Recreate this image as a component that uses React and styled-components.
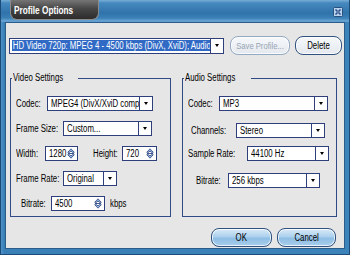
import React from "react";
import styled, { createGlobalStyle } from "styled-components";

const GlobalStyle = createGlobalStyle`
  html, body { margin:0; padding:0; background:#3f86bd; }
  body {
    width:350px; height:255px; overflow:hidden;
    font-family:"Liberation Sans", Arial, sans-serif;
  }
`;

const Window = styled.div`
  width:350px;
  height:255px;
  box-sizing:border-box;
  display:flex;
  flex-direction:column;
  border:1px solid #1d4b78;
  border-top:none;
  background:linear-gradient(to right, #4d93c8, #3a7fb6 3px, #3c83ba);
`;

const TitleBar = styled.div`
  height:22px;
  flex:none;
  display:flex;
  align-items:flex-start;
  background:linear-gradient(to bottom, #78add7 0, #4589bf 3px, #2f73aa 13px, #3a80b7 18px, #6aa5d3 21px, #5a99cb 22px);
`;

const TitleTab = styled.div`
  margin-left:9px;
  width:89px;
  height:20px;
  box-sizing:border-box;
  padding-left:3px;
  display:flex;
  align-items:center;
  border:1px solid #8c8c8c;
  border-top:none;
  border-radius:0 0 7px 7px;
  background:linear-gradient(to bottom, #757575, #474747 45%, #2c2c2c);
  color:#fff;
  font-weight:bold;
  font-size:11px;
`;

const Squeeze = styled.span`
  display:inline-block;
  white-space:nowrap;
  transform:scaleX(${p => p.$x || 0.78});
  transform-origin:${p => (p.$center ? "center" : "left")} center;
`;

const CloseButton = styled.div`
  margin:7px 6px 0 auto;
  width:10px;
  height:10px;
  display:flex;
`;

const Body = styled.div`
  flex:1;
  margin:0 4px 5px 4px;
  border:1px solid #2a5c8c;
  background:#e6e6e6;
  display:flex;
  flex-direction:column;
`;

const ProfileRow = styled.div`
  margin-top:13px;
  padding-left:3px;
  height:19px;
  display:flex;
  align-items:center;
  gap:5px;
`;

const Box = styled.div`
  flex:none;
  width:${p => p.$w}px;
  height:${p => p.$h || 15}px;
  box-sizing:border-box;
  border:1px solid #2e3f7c;
  background:#fff;
  display:flex;
  align-items:center;
  overflow:hidden;
`;

const BoxText = styled.span`
  flex:1;
  min-width:0;
  overflow:hidden;
  padding-left:${p => p.$pad ?? 3}px;
  font-size:10px;
  line-height:13px;
  color:#000;
  white-space:nowrap;
`;

const Highlight = styled(Squeeze)`
  background:#316ac5;
  color:#fff;
  padding:0 1px;
  line-height:11px;
`;

const Arrow = styled.span`
  flex:none;
  width:12px;
  align-self:stretch;
  border-left:1px solid #2e3f7c;
  display:flex;
  align-items:center;
  justify-content:center;
  &::after {
    content:"";
    border-left:2.5px solid transparent;
    border-right:2.5px solid transparent;
    border-top:3px solid #000;
  }
`;

const Pill = styled.div`
  flex:none;
  width:${p => p.$w}px;
  height:19px;
  box-sizing:border-box;
  border-radius:8px;
  border:1px solid ${p => (p.$disabled ? "#93a9c3" : "#2f5280")};
  box-shadow:inset 0 0 0 1px rgba(255,255,255,0.75);
  background:${p =>
    p.$tone === "blue"
      ? "linear-gradient(to bottom, #d9eaf8, #acd0ed 45%, #8fbee4 55%, #a7cdec)"
      : "linear-gradient(to bottom, #f6f8fb, #e4e9ef)"};
  color:${p => (p.$disabled ? "#98a4b3" : "#000")};
  font-size:${p => p.$fs || 10}px;
  display:flex;
  align-items:center;
  justify-content:center;
  overflow:hidden;
`;

const GroupsRow = styled.div`
  margin-top:17px;
  padding-left:4px;
  display:flex;
  gap:11px;
`;

const Group = styled.fieldset`
  margin:0;
  width:${p => p.$w}px;
  height:145px;
  box-sizing:border-box;
  border:1px solid #2f4a86;
  padding:12px 0 0 0;
  display:flex;
  flex-direction:column;
`;

const Legend = styled.legend`
  margin-left:1px;
  padding:0 1px;
  font-size:10px;
  line-height:12px;
  color:#000;
`;

const Row = styled.div`
  height:15px;
  margin-top:${p => p.$mt || 0}px;
  padding-left:${p => p.$indent || 5}px;
  display:flex;
  align-items:center;
`;

const Label = styled.span`
  flex:none;
  width:${p => p.$w}px;
  margin-left:${p => p.$ml || 0}px;
  font-size:10px;
  color:#000;
  white-space:nowrap;
`;

const Unit = styled.span`
  margin-left:5px;
  font-size:10px;
  color:#000;
`;

const ButtonsRow = styled.div`
  margin-top:11px;
  padding-right:8px;
  display:flex;
  justify-content:flex-end;
  gap:5px;
`;

const Close = () => (
  <svg width="10" height="10" viewBox="0 0 10 10">
    <rect x="0.5" y="0.5" width="9" height="9" rx="1" fill="#b9d3ec" stroke="#27507f" />
    <path d="M2.5 2.5 L7.5 7.5 M7.5 2.5 L2.5 7.5" stroke="#2d4f8c" strokeWidth="1.6" />
    <rect x="4.5" y="4.5" width="1" height="1" fill="#e8f2fb" />
  </svg>
);

const SpinIcon = () => (
  <svg width="8" height="11" viewBox="0 0 8 11" style={{ marginRight: 2, flex: "none" }}>
    <path d="M4 0.8 L7.3 4.3 L5.3 4.3 L4 3 L2.7 4.3 L0.7 4.3 Z" fill="#8fb0e0" stroke="#1f3570" strokeWidth="0.7" strokeLinejoin="round" />
    <path d="M0.7 6.7 L2.7 6.7 L4 8 L5.3 6.7 L7.3 6.7 L4 10.2 Z" fill="#8fb0e0" stroke="#1f3570" strokeWidth="0.7" strokeLinejoin="round" />
    <path d="M1 5.5 H7" stroke="#2a4585" strokeWidth="0.9" />
  </svg>
);

const Select = ({ w, value }) => (
  <Box $w={w}>
    <BoxText>
      <Squeeze>{value}</Squeeze>
    </BoxText>
    <Arrow />
  </Box>
);

const Spin = ({ w, value }) => (
  <Box $w={w}>
    <BoxText>
      <Squeeze>{value}</Squeeze>
    </BoxText>
    <SpinIcon />
  </Box>
);

const Text = ({ children }) => <Squeeze>{children}</Squeeze>;

export default function App() {
  return (
    <>
      <GlobalStyle />
      <Window>
        <TitleBar>
          <TitleTab>
            <Squeeze $x={0.75}>Profile Options</Squeeze>
          </TitleTab>
          <CloseButton>
            <Close />
          </CloseButton>
        </TitleBar>
        <Body>
          <ProfileRow>
            <Box $w={215} $h={16}>
              <BoxText $pad={2}>
                <Highlight>HD Video 720p: MPEG 4 - 4500 kbps (DivX, XviD); Audio: MP3 - 256 kbps</Highlight>
              </BoxText>
              <Arrow />
            </Box>
            <Pill $w={60} $disabled $fs={9} style={{ marginLeft: 1 }}>
              <Squeeze $center $x={0.85}>Save Profile...</Squeeze>
            </Pill>
            <Pill $w={47}>
              <Squeeze $center>Delete</Squeeze>
            </Pill>
          </ProfileRow>

          <GroupsRow>
            <Group $w={161}>
              <Legend><Text>Video Settings</Text></Legend>
              <Row>
                <Label $w={31}><Text>Codec:</Text></Label>
                <Select w={106} value="MPEG4 (DivX/XviD compatible)" />
              </Row>
              <Row $mt={10}>
                <Label $w={47}><Text>Frame Size:</Text></Label>
                <Select w={89} value="Custom..." />
              </Row>
              <Row $mt={10}>
                <Label $w={29}><Text>Width:</Text></Label>
                <Spin w={33} value="1280" />
                <Label $w={29} $ml={15}><Text>Height:</Text></Label>
                <Spin w={35} value="720" />
              </Row>
              <Row $mt={10}>
                <Label $w={47}><Text>Frame Rate:</Text></Label>
                <Select w={54} value="Original" />
              </Row>
              <Row $mt={10} $indent={10}>
                <Label $w={30}><Text>Bitrate:</Text></Label>
                <Spin w={54} value="4500" />
                <Unit><Text>kbps</Text></Unit>
              </Row>
            </Group>

            <Group $w={155}>
              <Legend><Text>Audio Settings</Text></Legend>
              <Row>
                <Label $w={31}><Text>Codec:</Text></Label>
                <Select w={109} value="MP3" />
              </Row>
              <Row $mt={12} $indent={8}>
                <Label $w={45}><Text>Channels:</Text></Label>
                <Select w={89} value="Stereo" />
              </Row>
              <Row $mt={8}>
                <Label $w={59}><Text>Sample Rate:</Text></Label>
                <Select w={82} value="44100 Hz" />
              </Row>
              <Row $mt={12} $indent={13}>
                <Label $w={32}><Text>Bitrate:</Text></Label>
                <Select w={92} value="256 kbps" />
              </Row>
            </Group>
          </GroupsRow>

          <ButtonsRow>
            <Pill $w={61} $tone="blue">
              <Squeeze $center>OK</Squeeze>
            </Pill>
            <Pill $w={59} $tone="blue">
              <Squeeze $center>Cancel</Squeeze>
            </Pill>
          </ButtonsRow>
        </Body>
      </Window>
    </>
  );
}
